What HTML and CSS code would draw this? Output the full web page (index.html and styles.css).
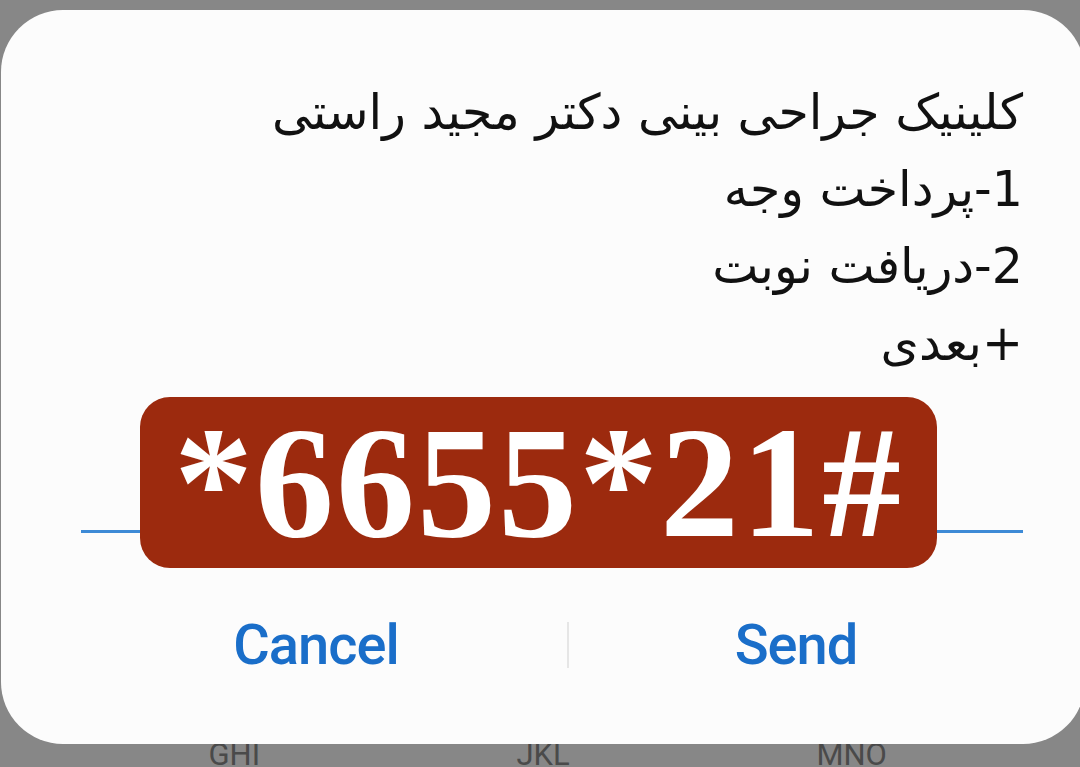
FILE: index.html
```html
<!DOCTYPE html>
<html lang="fa">
<head>
<meta charset="utf-8">
<link rel="stylesheet" href="styles.css">
</head>
<body>
<div class="dialog">
  <div class="message" dir="rtl">
    <p class="line">کلینیک جراحی بینی دکتر مجید راستی</p>
    <p class="line">1-پرداخت وجه</p>
    <p class="line">2-دریافت نوبت</p>
    <p class="line">+بعدی</p>
  </div>
  <div class="field">
    <div class="underline"></div>
    <div class="badge">*6655*21#</div>
  </div>
  <div class="actions">
    <button class="btn btn-cancel">Cancel</button>
    <span class="divider"></span>
    <button class="btn btn-send">Send</button>
  </div>
</div>
<div class="keypad">
  <span class="key">GHI</span>
  <span class="key">JKL</span>
  <span class="key">MNO</span>
</div>
</body>
</html>
```
FILE: styles.css
```css
html, body {
  margin: 0;
  padding: 0;
  width: 1080px;
  height: 767px;
  overflow: hidden;
  background: #878787;
}
.dialog {
  position: relative;
  z-index: 2;
  margin: 10px 0 0 1px;
  width: 1084px;
  height: 734px;
  background: #fcfcfc;
  border-radius: 62px;
  box-sizing: border-box;
  padding: 0 62px 0 80px;
  display: flex;
  flex-direction: column;
}
.message {
  padding-top: 64px;
  font-family: "DejaVu Sans", "Noto Sans", sans-serif;
  font-size: 49px;
  color: #111;
  text-align: right;
}
.line {
  margin: 0;
  height: 77px;
  line-height: 77px;
  white-space: nowrap;
}
.field {
  position: relative;
  height: 203px;
  flex: none;
}
.underline {
  position: absolute;
  left: 0;
  right: 0;
  top: 148px;
  height: 3px;
  background: #3d8ad6;
}
.badge {
  position: absolute;
  left: 59px;
  top: 15px;
  width: 797px;
  height: 171px;
  background: #9c2a0e;
  border-radius: 30px;
  color: #fff;
  font-family: "Liberation Serif", "DejaVu Serif", serif;
  font-weight: bold;
  font-size: 158px;
  line-height: 171px;
  text-align: center;
  letter-spacing: 2px;
}
.actions {
  display: flex;
  align-items: center;
  height: 120px;
  flex: none;
}
.btn {
  border: none;
  background: none;
  padding: 0;
  font-family: Roboto, "Liberation Sans", sans-serif;
  font-weight: 500;
  font-size: 56px;
  letter-spacing: -1px;
  color: #1a6ec9;
}
.btn-cancel {
  flex: 0 0 470px;
}
.btn-send {
  flex: 1;
}
.divider {
  width: 2px;
  height: 46px;
  margin-left: 16px;
  background: #e6e6e6;
}
.keypad {
  display: flex;
  padding: 0 74px 0 80px;
  margin-top: -9px;
  position: relative;
  z-index: 1;
}
.key {
  flex: 1;
  text-align: center;
  font-family: Roboto, "Liberation Sans", sans-serif;
  font-size: 31px;
  color: #4a4a4a;
  line-height: 40px;
}
```
